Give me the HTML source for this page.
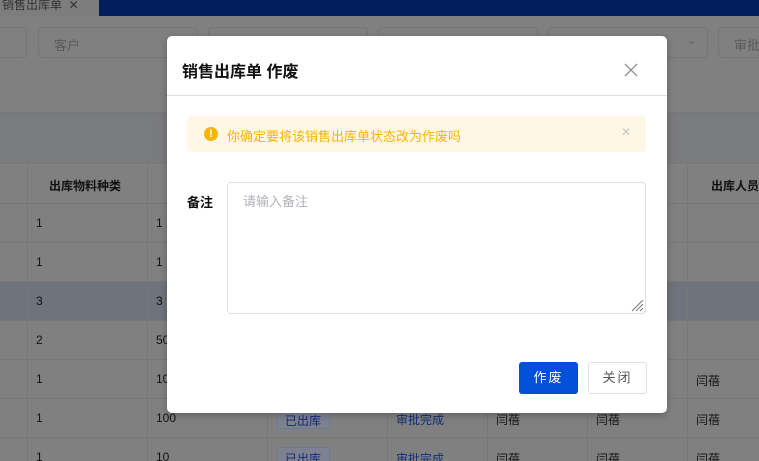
<!DOCTYPE html>
<html><head><meta charset="utf-8"><style>
*{box-sizing:border-box;margin:0;padding:0}
html,body{width:759px;height:461px;overflow:hidden}
body{background:#808080;font-family:"Liberation Sans","Noto Sans CJK SC",sans-serif;font-size:12px;position:relative;color:#0d0f14}
.abs{position:absolute}
.inp{position:absolute;top:27px;height:31px;border:1px solid #767676;border-radius:4px;color:#5a5a5a;font-size:13px;padding:7px 15px}
.vl{position:absolute;top:163px;bottom:0;width:1px;background:#777}
.hl{position:absolute;left:0;right:0;height:1px;background:#777}
.c{position:absolute;font-size:12px;color:#111}
.tag{position:absolute;left:277px;width:53px;height:20px;border:1px solid #6c7a95;background:#7d8190;color:#102a7a;font-size:12px;padding:2px 7px}
.blue{color:#10307a}
</style></head><body>
<div class="abs" style="left:0;top:0;width:99px;height:16px;background:#7d7d7d;color:#333;font-size:12px;padding:0 0 0 2px;line-height:10px;overflow:hidden">销售出库单 &nbsp;✕</div>
<div class="abs" style="left:99px;top:0;right:0;height:16px;background:#001f5b"></div>
<div class="inp" style="left:-10px;width:37px"></div>
<div class="inp" style="left:38px;width:160px">客户</div>
<div class="inp" style="left:208px;width:160px"></div>
<div class="inp" style="left:378px;width:160px"></div>
<div class="inp" style="left:548px;width:160px"><span style="position:absolute;right:10px;top:4px;color:#666">⌄</span></div>
<div class="inp" style="left:718px;width:60px">审批</div>
<div class="abs" style="left:0;right:0;top:112px;height:51px;background:#7a7b7d;border-top:1px solid #777"></div>
<div class="hl" style="top:163px"></div>
<div class="hl" style="top:203px"></div>
<div class="abs" style="left:0;right:0;top:282px;height:38px;background:#6f737c"></div>
<div class="hl" style="top:242px"></div><div class="hl" style="top:281px"></div><div class="hl" style="top:320px"></div><div class="hl" style="top:359px"></div><div class="hl" style="top:398px"></div><div class="hl" style="top:437px"></div>
<div class="vl" style="left:27px"></div><div class="vl" style="left:147px"></div><div class="vl" style="left:267px"></div><div class="vl" style="left:387px"></div><div class="vl" style="left:487px"></div><div class="vl" style="left:587px"></div><div class="vl" style="left:687px"></div>
<div class="c" style="left:49px;top:177px;font-weight:bold">出库物料种类</div>
<div class="c" style="left:711px;top:177px;font-weight:bold">出库人员</div>
<div class="c" style="left:36px;top:216px">1</div><div class="c" style="left:156px;top:216px">1</div>
<div class="c" style="left:36px;top:255px">1</div><div class="c" style="left:156px;top:255px">1</div>
<div class="c" style="left:36px;top:294px">3</div><div class="c" style="left:156px;top:294px">3</div>
<div class="c" style="left:36px;top:333px">2</div><div class="c" style="left:156px;top:333px">50</div>
<div class="c" style="left:36px;top:372px">1</div><div class="c" style="left:156px;top:372px">10</div>
<div class="c" style="left:36px;top:411px">1</div><div class="c" style="left:156px;top:411px">100</div>
<div class="c" style="left:36px;top:450px">1</div><div class="c" style="left:156px;top:450px">10</div>
<div class="tag" style="top:409px">已出库</div><div class="tag" style="top:447px">已出库</div>
<div class="c blue" style="left:396px;top:411px">审批完成</div><div class="c blue" style="left:396px;top:450px">审批完成</div>
<div class="c" style="left:496px;top:411px">闫蓓</div><div class="c" style="left:596px;top:411px">闫蓓</div><div class="c" style="left:696px;top:411px">闫蓓</div>
<div class="c" style="left:496px;top:450px">闫蓓</div><div class="c" style="left:596px;top:450px">闫蓓</div><div class="c" style="left:696px;top:450px">闫蓓</div>
<div class="c" style="left:696px;top:372px">闫蓓</div>

<div class="abs" style="left:167px;top:36px;width:500px;height:377px;background:#fff;border-radius:5px;box-shadow:0 2px 8px rgba(0,0,0,.25)">
<div class="abs" style="left:15px;top:22px;font-size:16px;font-weight:bold;color:#111">销售出库单 作废</div>
<svg class="abs" style="left:457px;top:27px" width="14" height="14" viewBox="0 0 14 14"><path d="M1 1L13 13M13 1L1 13" stroke="#8a8d94" stroke-width="1.3"/></svg>
<div class="abs" style="left:0;right:0;top:59px;height:1px;background:#dcdde0"></div>
<div class="abs" style="left:20px;top:80px;width:459px;height:36px;background:#fef7e6;border-radius:4px">
<div class="abs" style="left:17px;top:11px;width:14px;height:14px;border-radius:50%;background:#f7b500;color:#fff;font-size:11px;font-weight:bold;text-align:center;line-height:14px">!</div>
<div class="abs" style="left:40px;top:10px;font-size:13px;color:#f7b500">你确定要将该销售出库单状态改为作废吗</div>
<div class="abs" style="left:434px;top:9px;font-size:12px;color:#c8c8c8">✕</div>
</div>
<div class="abs" style="left:20px;top:156px;font-size:13px;font-weight:bold;color:#111">备注</div>
<div class="abs" style="left:60px;top:146px;width:419px;height:132px;border:1px solid #dcdfe6;border-radius:4px;padding:8px 15px;font-size:13px;color:#b0b3b9">请输入备注
<svg class="abs" style="right:1px;bottom:1px" width="14" height="14" viewBox="0 0 14 14"><path d="M13 2L2 13M13 6L6 13M13 10L10 13" stroke="#777" stroke-width="1"/></svg></div>
<div class="abs" style="left:352px;top:326px;width:59px;height:32px;background:#0050d9;border-radius:3px;color:#fff;font-size:13px;text-align:center;line-height:32px;letter-spacing:2px">作废</div>
<div class="abs" style="left:421px;top:326px;width:59px;height:32px;border:1px solid #dcdfe6;border-radius:3px;color:#555;font-size:13px;text-align:center;line-height:30px;letter-spacing:2px">关闭</div>
</div>
</body></html>
